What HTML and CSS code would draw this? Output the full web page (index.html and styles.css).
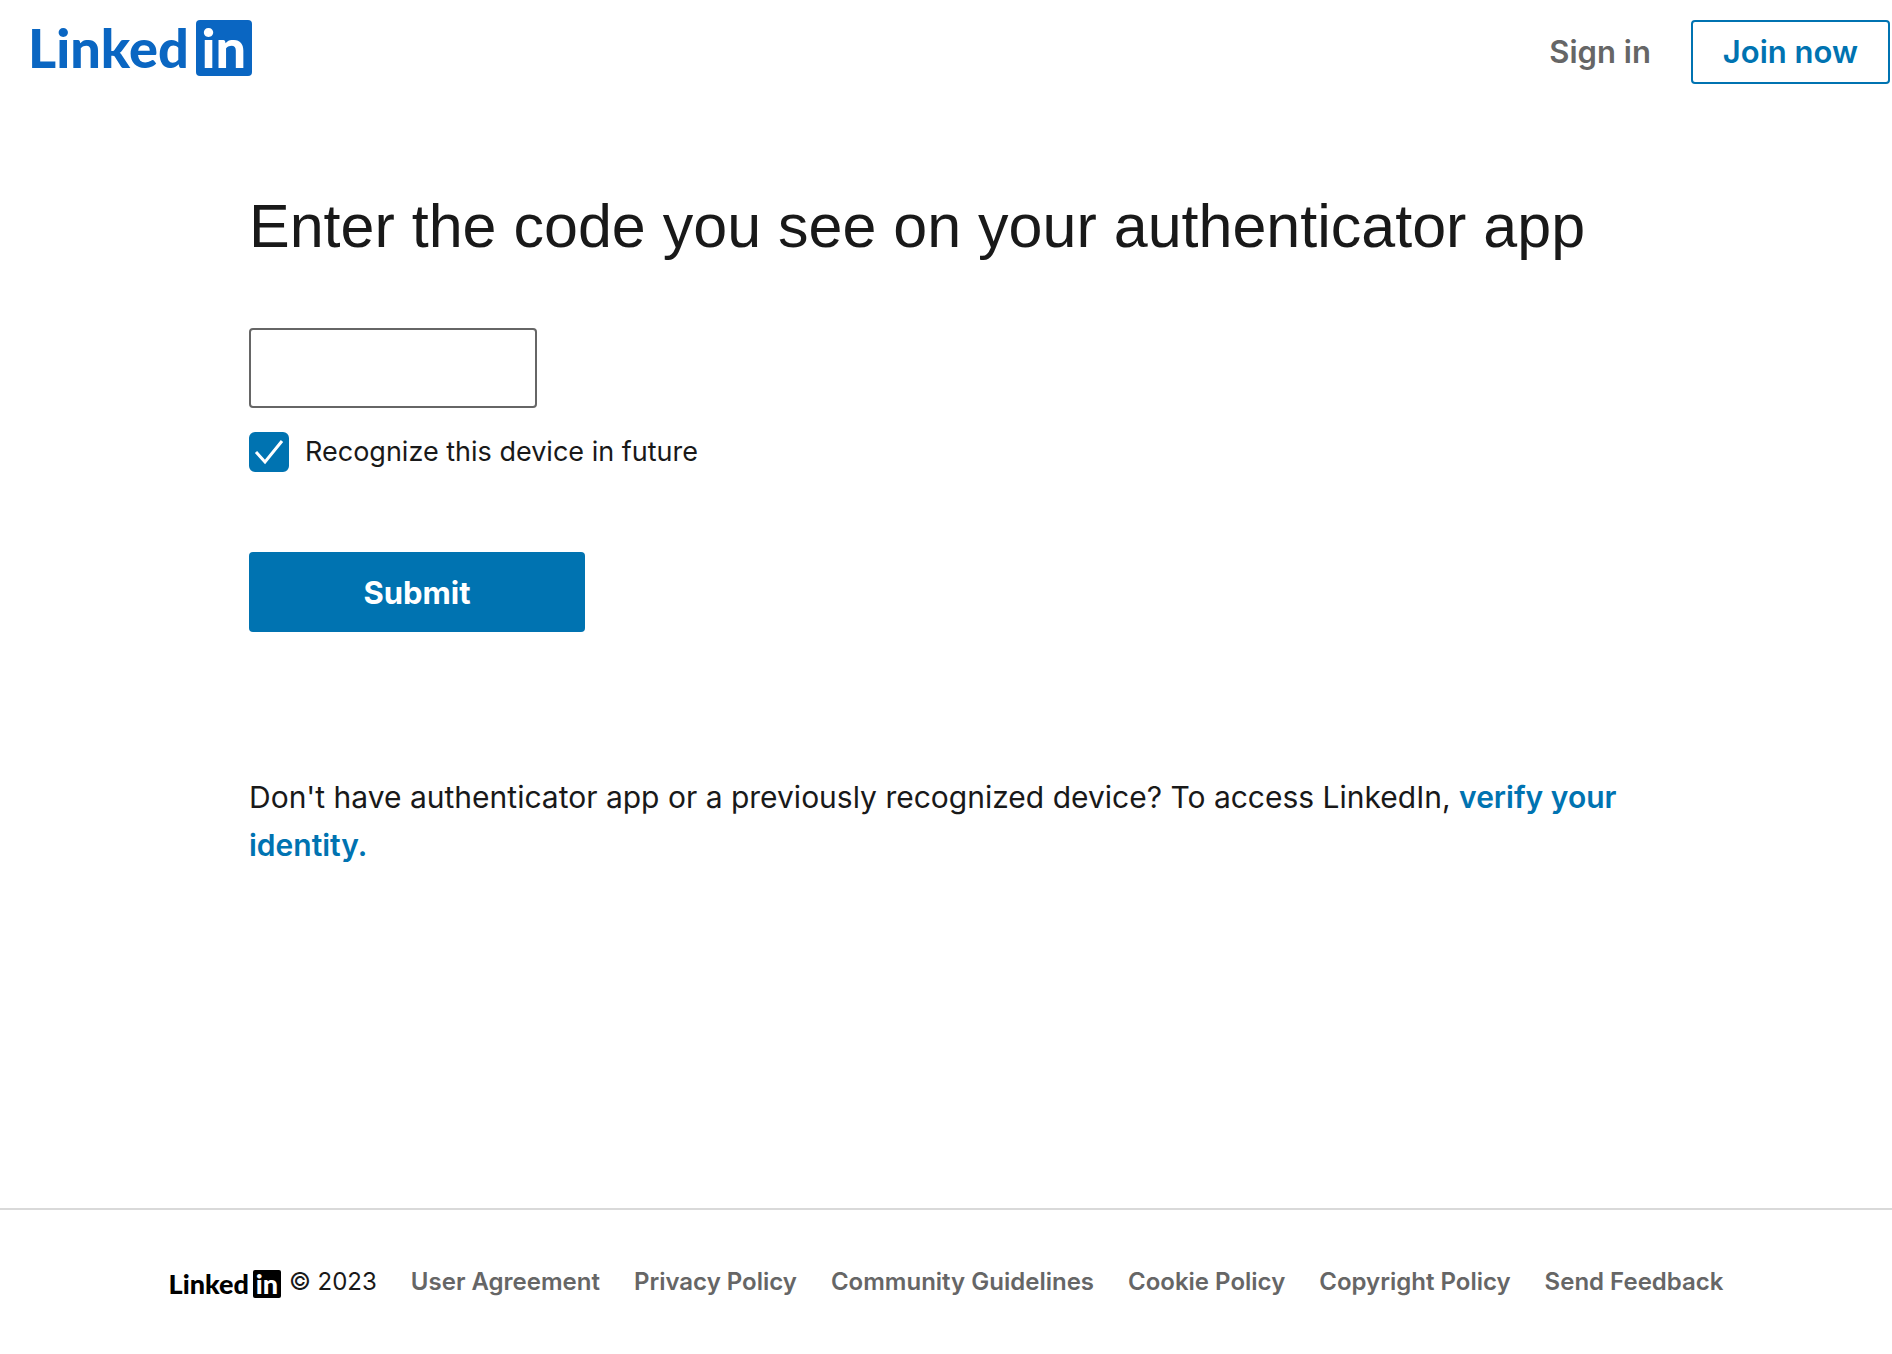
FILE: index.html
```html
<!DOCTYPE html>
<html lang="en">
<head>
  <meta charset="UTF-8">
  <meta name="viewport" content="width=device-width, initial-scale=1.0">
  <title>Security Verification | LinkedIn</title>
  <link rel="stylesheet" href="styles.css">
</head>
<body>

  <header class="site-header">
    <a href="#" class="logo" aria-label="LinkedIn">
      <span class="logo-word">Linked</span><span class="logo-box">in</span>
    </a>
    <nav class="header-nav">
      <a href="#" class="sign-in">Sign in</a>
      <a href="#" class="join-now">Join now</a>
    </nav>
  </header>

  <main class="content">
    <h1>Enter the code you see on your authenticator app</h1>

    <form class="code-form">
      <input type="text" name="pin" id="pin" class="pin-input" aria-label="Authenticator code" maxlength="6">
      <div class="remember">
        <span class="checkbox">
          <input type="checkbox" name="recognize" id="recognize" checked>
          <svg viewBox="0 0 40 40" aria-hidden="true">
            <path d="M7 20L16 30L33 9" fill="none" stroke="#fff" stroke-width="3"/>
          </svg>
        </span>
        <label for="recognize">Recognize this device in future</label>
      </div>
      <button type="submit" class="submit-button">Submit</button>
    </form>

    <p class="help-text">Don't have authenticator app or a previously recognized device? To access LinkedIn, <a href="#">verify your identity.</a></p>
  </main>

  <footer class="site-footer">
    <div class="copyright">
      <span class="logo logo-small"><span class="logo-word">Linked</span><span class="logo-box">in</span></span>
      <span>© 2023</span>
    </div>
    <a href="#">User Agreement</a>
    <a href="#">Privacy Policy</a>
    <a href="#">Community Guidelines</a>
    <a href="#">Cookie Policy</a>
    <a href="#">Copyright Policy</a>
    <a href="#">Send Feedback</a>
  </footer>

</body>
</html>
```
FILE: styles.css
```css
* {
    box-sizing: border-box;
}

body {
    display: flex;
    flex-direction: column;
    min-height: 100vh;
    margin: 0;
    font-family: Inter, "Liberation Sans", sans-serif;
    color: #191919;
    background: #fff;
}

a {
    color: #0073b1;
    font-weight: 600;
    text-decoration: none;
}

a:hover {
    text-decoration: underline;
}

/* Header */
.site-header {
    display: flex;
    justify-content: space-between;
    align-items: flex-start;
    padding: 20px 2px 0 28px;
}

.header-nav {
    display: flex;
    align-items: center;
    gap: 40px;
    font-size: 31px;
    line-height: 60px;
}

.header-nav .sign-in {
    color: #666;
}

.join-now {
    padding: 0 30px;
    border: 2px solid #0073b1;
    border-radius: 4px;
}

/* Logo */
.logo {
    display: flex;
    align-items: center;
    gap: 7px;
    font-family: Lato, "Liberation Sans", sans-serif;
    font-size: 54px;
    font-weight: 900;
    line-height: 56px;
    color: #0a66c2;
}

.logo:hover {
    text-decoration: none;
}

.logo-box {
    width: 56px;
    border-radius: 4px;
    background: #0a66c2;
    color: #fff;
    text-align: center;
}

.logo-small {
    gap: 4px;
    font-size: 27px;
    line-height: 28px;
    color: #000;
}

.logo-small .logo-box {
    width: 28px;
    border-radius: 2px;
    background: #000;
}

/* Main content */
.content {
    flex: 1;
    width: 100%;
    max-width: 1394px;
    margin: 0 auto;
    padding-top: 102px;
}

h1 {
    margin: 0 0 62px;
    font-family: "Liberation Sans", Arial, sans-serif;
    font-size: 61px;
    font-weight: 400;
    line-height: 80px;
}

.code-form {
    display: flex;
    flex-direction: column;
    align-items: flex-start;
}

.pin-input {
    width: 288px;
    height: 80px;
    padding: 0 24px;
    border: 2px solid #666;
    border-radius: 4px;
    font: inherit;
    font-size: 32px;
}

.remember {
    display: flex;
    align-items: center;
    gap: 16px;
    margin: 24px 0 80px;
    font-size: 27px;
    line-height: 40px;
}

.checkbox {
    position: relative;
    width: 40px;
    height: 40px;
}

.checkbox input {
    appearance: none;
    display: block;
    width: 40px;
    height: 40px;
    margin: 0;
    border: 2px solid #666;
    border-radius: 6px;
}

.checkbox input:checked {
    border-color: #0073b1;
    background: #0073b1;
}

/* Tick lies over the box */
.checkbox svg {
    position: absolute;
    inset: 0;
    pointer-events: none;
}

.submit-button {
    width: 336px;
    height: 80px;
    border: none;
    border-radius: 4px;
    background: #0073b1;
    color: #fff;
    font: inherit;
    font-size: 31px;
    font-weight: 700;
    cursor: pointer;
}

.help-text {
    margin: 141px 0 0;
    font-size: 30px;
    line-height: 48px;
}

/* Footer */
.site-footer {
    display: flex;
    justify-content: center;
    align-items: center;
    gap: 34px;
    height: 146px;
    border-top: 2px solid #d9d9d9;
    font-size: 24px;
    line-height: 32px;
}

.site-footer a {
    color: #666;
}

.copyright {
    display: flex;
    align-items: flex-end;
    gap: 8px;
}
```
